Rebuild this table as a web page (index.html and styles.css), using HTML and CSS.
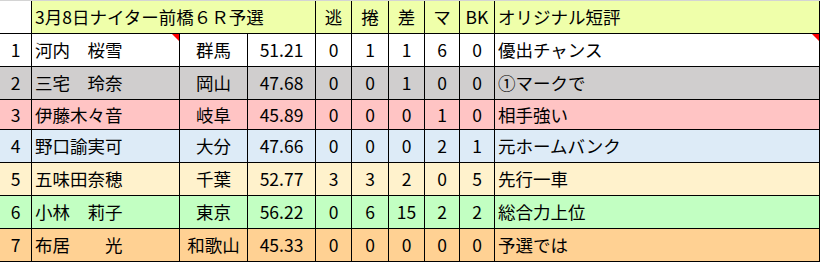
FILE: index.html
```html
<!DOCTYPE html>
<html lang="ja">
<head>
<meta charset="utf-8">
<link rel="stylesheet" href="styles.css">
</head>
<body>
<div class="sheet">
  <div class="row head">
    <div class="c corner"></div>
    <div class="c title">3月8日ナイター前橋６Ｒ予選</div>
    <div class="c ctr">逃</div>
    <div class="c ctr">捲</div>
    <div class="c ctr">差</div>
    <div class="c ctr">マ</div>
    <div class="c ctr">BK</div>
    <div class="c txt">オリジナル短評</div>
  </div>
  <div class="row r1">
    <div class="c ctr">1</div>
    <div class="c txt note">河内　桜雪</div>
    <div class="c ctr">群馬</div>
    <div class="c ctr">51.21</div>
    <div class="c ctr">0</div>
    <div class="c ctr">1</div>
    <div class="c ctr">1</div>
    <div class="c ctr">6</div>
    <div class="c ctr">0</div>
    <div class="c txt note">優出チャンス</div>
  </div>
  <div class="row r2">
    <div class="c ctr">2</div>
    <div class="c txt">三宅　玲奈</div>
    <div class="c ctr">岡山</div>
    <div class="c ctr">47.68</div>
    <div class="c ctr">0</div>
    <div class="c ctr">0</div>
    <div class="c ctr">1</div>
    <div class="c ctr">0</div>
    <div class="c ctr">0</div>
    <div class="c txt">①マークで</div>
  </div>
  <div class="row r3">
    <div class="c ctr">3</div>
    <div class="c txt">伊藤木々音</div>
    <div class="c ctr">岐阜</div>
    <div class="c ctr">45.89</div>
    <div class="c ctr">0</div>
    <div class="c ctr">0</div>
    <div class="c ctr">0</div>
    <div class="c ctr">1</div>
    <div class="c ctr">0</div>
    <div class="c txt">相手強い</div>
  </div>
  <div class="row r4">
    <div class="c ctr">4</div>
    <div class="c txt">野口諭実可</div>
    <div class="c ctr">大分</div>
    <div class="c ctr">47.66</div>
    <div class="c ctr">0</div>
    <div class="c ctr">0</div>
    <div class="c ctr">0</div>
    <div class="c ctr">2</div>
    <div class="c ctr">1</div>
    <div class="c txt">元ホームバンク</div>
  </div>
  <div class="row r5">
    <div class="c ctr">5</div>
    <div class="c txt">五味田奈穂</div>
    <div class="c ctr">千葉</div>
    <div class="c ctr">52.77</div>
    <div class="c ctr">3</div>
    <div class="c ctr">3</div>
    <div class="c ctr">2</div>
    <div class="c ctr">0</div>
    <div class="c ctr">5</div>
    <div class="c txt">先行一車</div>
  </div>
  <div class="row r6">
    <div class="c ctr">6</div>
    <div class="c txt">小林　莉子</div>
    <div class="c ctr">東京</div>
    <div class="c ctr">56.22</div>
    <div class="c ctr">0</div>
    <div class="c ctr">6</div>
    <div class="c ctr">15</div>
    <div class="c ctr">2</div>
    <div class="c ctr">2</div>
    <div class="c txt">総合力上位</div>
  </div>
  <div class="row r7">
    <div class="c ctr">7</div>
    <div class="c txt">布居　　光</div>
    <div class="c ctr">和歌山</div>
    <div class="c ctr">45.33</div>
    <div class="c ctr">0</div>
    <div class="c ctr">0</div>
    <div class="c ctr">0</div>
    <div class="c ctr">0</div>
    <div class="c ctr">0</div>
    <div class="c txt">予選では</div>
  </div>
</div>
</body>
</html>
```

FILE: styles.css
```css
html, body {
  margin: 0;
  padding: 0;
  background: #ffffff;
}

body {
  font-family: "Noto Sans CJK JP", "Noto Sans", sans-serif;
  font-size: 17.5px;
  color: #000000;
}

.sheet {
  width: 820px;
  border-top: 1px solid #d4d4d4;
}

.row {
  display: grid;
  grid-template-columns: 32px 148px 68px 68px 36px 37px 36px 35px 35px 325px;
  height: 33px;
}

.row.r3 {
  height: 30px;
}

.c {
  box-sizing: border-box;
  border-right: 1px solid #000;
  border-bottom: 1px solid #000;
  display: flex;
  align-items: center;
  line-height: 1;
  white-space: nowrap;
  position: relative;
}

.ctr {
  justify-content: center;
}

.txt {
  padding-left: 3px;
}

.title {
  grid-column: span 3;
  padding-left: 3px;
}

.head .c {
  background: #efffaa;
}

.head .corner {
  background: #ffffff;
}

.r1 .c { background: #ffffff; }
.r2 .c { background: #d0cece; }
.r3 .c { background: #ffc4c4; }
.r4 .c { background: #ddebf7; }
.r5 .c { background: #fff2cc; }
.r6 .c { background: #c2ffc2; }
.r7 .c { background: #ffd193; }

.note::after {
  content: "";
  position: absolute;
  top: 0;
  right: 0;
  width: 0;
  height: 0;
  border-top: 7px solid #ff0000;
  border-left: 7px solid transparent;
}
```
